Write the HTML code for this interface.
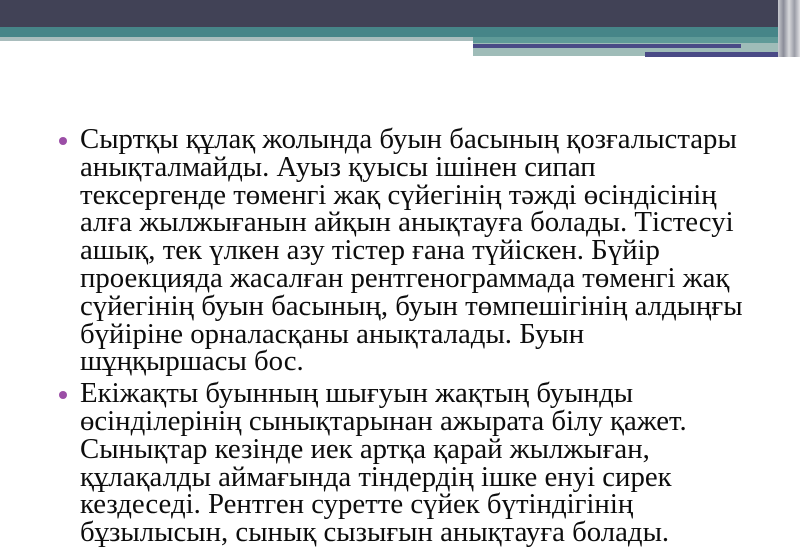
<!DOCTYPE html>
<html><head><meta charset="utf-8"><style>
html,body{margin:0;padding:0;}
body{width:800px;height:547px;position:relative;overflow:hidden;background:#fff;font-family:"Liberation Serif",serif;}
.b{position:absolute;}
ul{position:absolute;left:58px;top:126px;margin:0;padding:0;list-style:none;font-size:28.8px;line-height:27.8px;color:#0d0d0d;}
li{position:relative;padding-left:22px;margin-bottom:4px;white-space:nowrap;}
li:before{content:"";position:absolute;left:1px;top:11px;width:8px;height:8px;border-radius:50%;background:#9b4ea6;}
</style></head><body>
<div class="b" style="left:0;top:0;width:800px;height:27px;background:#414256"></div>
<div class="b" style="left:0;top:27px;width:800px;height:10px;background:#468588"></div>
<div class="b" style="left:0;top:37px;width:473px;height:4px;background:#a9bdbd"></div>
<div class="b" style="left:473px;top:37px;width:305px;height:19px;background:#9fbcb8"></div>
<div class="b" style="left:473px;top:37px;width:305px;height:6px;background:#5f9a98"></div>
<div class="b" style="left:473px;top:44px;width:268px;height:4px;background:#4a4a86"></div>
<div class="b" style="left:645px;top:52px;width:140px;height:5px;background:#4a4a86"></div>
<div class="b" style="left:778px;top:0;width:22px;height:57px;background:linear-gradient(90deg,#c9cbd0,#8a8c98,#d8d9dc,#9a9ca6,#e0e0e4)"></div>
<ul>
<li>Сыртқы құлақ жолында буын басының қозғалыстары<br>анықталмайды. Ауыз қуысы ішінен сипап<br>тексергенде төменгі жақ сүйегінің тәжді өсіндісінің<br>алға жылжығанын айқын анықтауға болады. Тістесуі<br>ашық, тек үлкен азу тістер ғана түйіскен. Бүйір<br>проекцияда жасалған рентгенограммада төменгі жақ<br>сүйегінің буын басының, буын төмпешігінің алдыңғы<br>бүйіріне орналасқаны анықталады. Буын<br>шұңқыршасы бос.</li>
<li>Екіжақты буынның шығуын жақтың буынды<br>өсінділерінің сынықтарынан ажырата білу қажет.<br>Сынықтар кезінде иек артқа қарай жылжыған,<br>құлақалды аймағында тіндердің ішке енуі сирек<br>кездеседі. Рентген суретте сүйек бүтіндігінің<br>бұзылысын, сынық сызығын анықтауға болады.</li>
</ul>
</body></html>
